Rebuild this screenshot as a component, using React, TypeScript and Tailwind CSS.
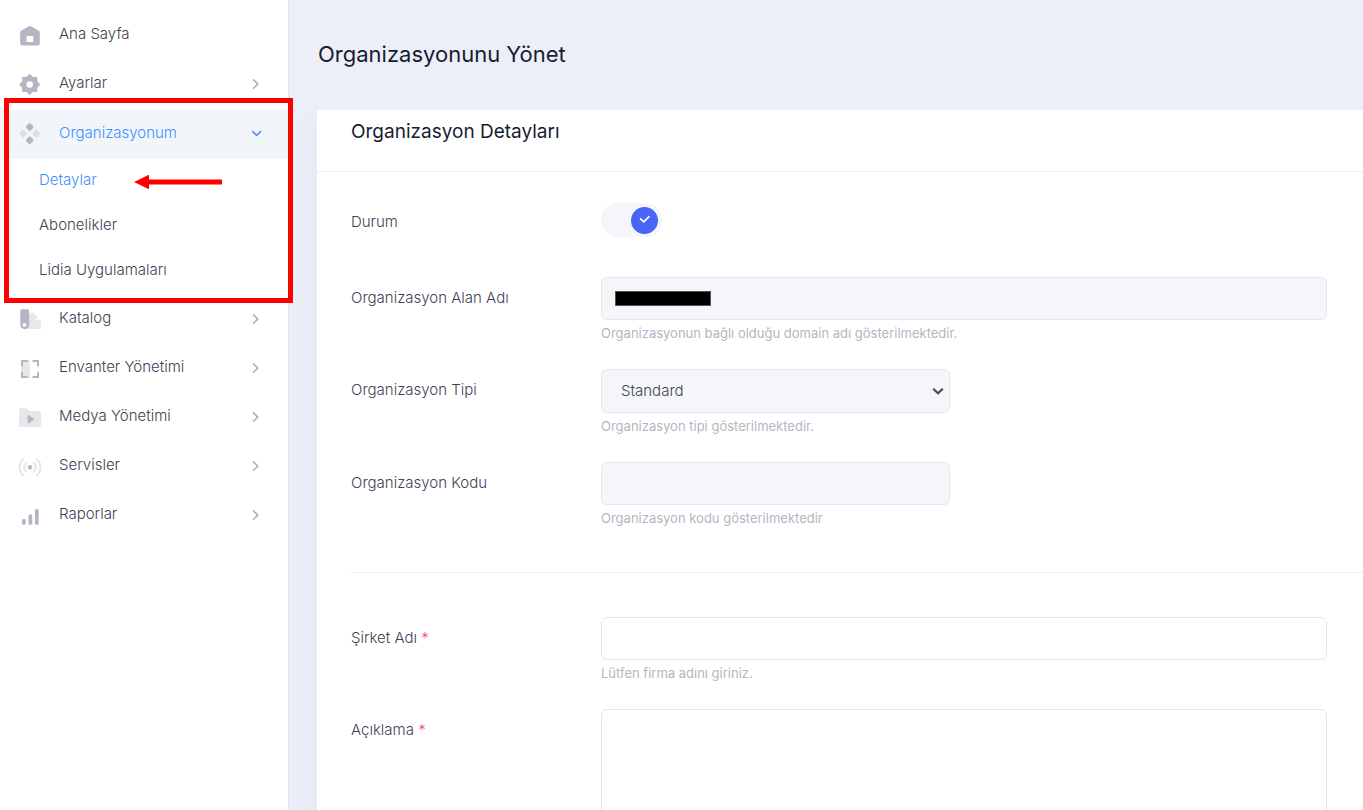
import type { ReactNode } from "react";

const DARK = "#b5b5c3";
const PALE = "#e6e6eb";

function Icon({ children }: { children: ReactNode }) {
  return (
    <svg className="size-6 shrink-0" viewBox="0 0 24 24" fill={DARK} aria-hidden="true">
      {children}
    </svg>
  );
}

const HomeIcon = () => (
  <Icon>
    <path
      fillRule="evenodd"
      d="M2.2 8.6c0-.9.4-1.5 1.200-2L10.800 2.300c.7-.4 1.500-.4 2.200 0l7.600 4.300c.8.500 1.200 1.100 1.200 2v10.800c0 1.200-.9 2.100-2.100 2.100H4.300c-1.200 0-2.100-.9-2.100-2.100zM9.500 12a1 1 0 0 0-1 1v4a1 1 0 0 0 1 1h4.800a1 1 0 0 0 1-1v-4a1 1 0 0 0-1-1z"
    />
  </Icon>
);

const GearIcon = () => (
  <Icon>
    <path
      fillRule="evenodd"
      strokeLinejoin="round"
      d="M11.700.8 14.900 3.900H19.300V8.300L22.400 11.500 19.300 14.700V19.100H14.900L11.700 22.200 8.500 19.100H4.100V14.700L1 11.500 4.100 8.300V3.900H8.500ZM11.700 8.200a3.300 3.300 0 1 0 0 6.600a3.300 3.300 0 0 0 0-6.600z"
    />
  </Icon>
);

const DiamondsIcon = () => (
  <Icon>
    <rect x="8.600" y="1.900" width="6.200" height="6.200" rx="1.700" transform="rotate(45 11.700 5)" />
    <rect x="8.600" y="15.100" width="6.200" height="6.200" rx="1.700" transform="rotate(45 11.700 18.200)" />
    <rect x="2" y="8.500" width="6.200" height="6.200" rx="1.700" transform="rotate(45 5.100 11.600)" fill="#dedfe4" />
    <rect x="15.200" y="8.500" width="6.200" height="6.200" rx="1.700" transform="rotate(45 18.300 11.600)" fill="#dedfe4" />
  </Icon>
);

const CatalogIcon = () => (
  <Icon>
    <path
      fill={PALE}
      d="M11.300 6.800 13.200 4.900c.7-.7 1.600-.7 2.300 0l3 3c.7.700.7 1.600 0 2.300L16.400 12.300H21.300c1 0 1.700.7 1.700 1.700v5.400c0 1-.7 1.700-1.700 1.700H8.500z"
    />
    <path
      fillRule="evenodd"
      d="M4.300 1.300h4.900c1.200 0 2 .8 2 2v13.400a4.450 4.450 0 0 1-8.900 0V3.300c0-1.200.8-2 2-2zM6.500 14.900a1.900 1.900 0 1 0 0 3.800a1.900 1.900 0 0 0 0-3.800z"
    />
  </Icon>
);

const InventoryIcon = () => (
  <Icon>
    <rect x="3" y="3" width="9" height="18" rx="1" fill={PALE} />
    <path
      fill="none"
      stroke={DARK}
      strokeWidth="2"
      strokeLinecap="round"
      d="M9 4H4v4.500M15.200 4H20v4.500M20 15.500V20h-4.800M9 20H4v-4.500"
    />
  </Icon>
);

const MediaIcon = () => (
  <Icon>
    <path
      fill={PALE}
      d="M2.600 2.300h5c.5 0 .9.2 1.200.5L11 5h10.300c1 0 1.700.7 1.700 1.700v12.600c0 1-.7 1.700-1.700 1.700H2.700C1.700 21 1 20.300 1 19.300V4c0-1 .6-1.700 1.600-1.700z"
    />
    <path d="M9.700 9.400v7.800c0 .4.400.6.700.4l5.600-3.900c.3-.2.300-.6 0-.8l-5.600-3.900c-.3-.2-.7 0-.7.400z" />
  </Icon>
);

const ServicesIcon = () => (
  <Icon>
    <g fill="none" stroke={PALE} strokeWidth="2" strokeLinecap="round">
      <path d="M8.400 7.600a5.800 5.800 0 0 0 0 9.200M15.600 7.600a5.800 5.800 0 0 1 0 9.200" />
      <path d="M5.200 4.200a10.500 10.500 0 0 0 0 16M18.800 4.200a10.500 10.500 0 0 1 0 16" />
    </g>
    <circle cx="12" cy="12.200" r="2.200" />
  </Icon>
);

const ReportsIcon = () => (
  <Icon>
    <rect x="4" y="15" width="3.700" height="5.800" rx="1.400" />
    <rect x="10.500" y="10.500" width="3.700" height="10.300" rx="1.400" />
    <rect x="17" y="5" width="3.700" height="15.800" rx="1.400" />
  </Icon>
);

const ChevronRight = () => (
  <svg className="size-3" viewBox="0 0 12 12" fill="none" stroke="#b0b0bf" strokeWidth="1.600" aria-hidden="true">
    <path d="M3.500 .9 7.800 5.100 3.500 9.300" strokeLinecap="round" strokeLinejoin="round" />
  </svg>
);

const ChevronDown = () => (
  <svg className="size-3" viewBox="0 0 12 12" fill="none" stroke="#3f8fff" strokeWidth="1.600" aria-hidden="true">
    <path d="M2.600 3.500 6.600 7.500 10.600 3.500" strokeLinecap="round" strokeLinejoin="round" />
  </svg>
);

type NavItem = { label: string; icon: ReactNode; leaf?: boolean };

const before: NavItem[] = [
  { label: "Ana Sayfa", icon: <HomeIcon />, leaf: true },
  { label: "Ayarlar", icon: <GearIcon /> },
];

const after: NavItem[] = [
  { label: "Katalog", icon: <CatalogIcon /> },
  { label: "Envanter Yönetimi", icon: <InventoryIcon /> },
  { label: "Medya Yönetimi", icon: <MediaIcon /> },
  { label: "Servisler", icon: <ServicesIcon /> },
  { label: "Raporlar", icon: <ReportsIcon /> },
];

function NavRow({ label, icon, leaf }: NavItem) {
  return (
    <li>
      <a href="#" className="flex h-[49px] items-center pr-[26px] pl-[18px]">
        {icon}
        <span className="flex-1 pb-[3px] pl-[17px]">{label}</span>
        {!leaf && <ChevronRight />}
      </a>
    </li>
  );
}

function Sidebar() {
  return (
    <nav className="relative w-[289px] shrink-0 border-r border-[#e4e6ef] bg-white pt-[11px] text-[15px] leading-5 font-light text-[#3f4254]">
      <ul>
        {before.map((item) => (
          <NavRow key={item.label} {...item} />
        ))}
        <li>
          <button
            type="button"
            aria-expanded="true"
            className="flex h-[50px] w-full items-center bg-[#f2f5f9] pr-[26px] pl-[18px] text-left text-[#3f8fff]"
          >
            <DiamondsIcon />
            <span className="flex-1 pb-[3px] pl-[17px]">Organizasyonum</span>
            <ChevronDown />
          </button>
          <ul className="pb-px">
            <li>
              <a href="#" className="flex h-[45px] items-center pb-[3px] pl-[39px] text-[#3f8fff]">
                Detaylar
              </a>
            </li>
            <li>
              <a href="#" className="flex h-[45px] items-center pb-[3px] pl-[39px]">
                Abonelikler
              </a>
            </li>
            <li>
              <a href="#" className="flex h-[45px] items-center pb-[3px] pl-[39px]">
                Lidia Uygulamaları
              </a>
            </li>
          </ul>
        </li>
        {after.map((item) => (
          <NavRow key={item.label} {...item} />
        ))}
      </ul>
      <div className="pointer-events-none absolute top-[98px] left-1 z-10 h-[205px] w-[289px] border-5 border-[#ff0000]" />
      <svg
        className="pointer-events-none absolute top-[174px] left-[134px] h-4 w-[88px]"
        viewBox="0 0 88 16"
        fill="#ff0000"
        aria-hidden="true"
      >
        <path d="M0 8 15 .7V5.500H88v5H15v4.800z" />
      </svg>
    </nav>
  );
}

const fieldClass = "block w-full rounded-md border border-[#e4e6ef] px-[19px] text-[15px] font-light text-[#3f4254]";

function Field({
  id,
  label,
  required,
  help,
  half,
  children,
}: {
  id: string;
  label: string;
  required?: boolean;
  help?: string;
  half?: boolean;
  children: ReactNode;
}) {
  return (
    <div className="flex pr-9">
      <label htmlFor={id} className="w-[250px] shrink-0 pt-[11px] text-[15px] leading-5 font-light">
        {label} {required && <span className="text-[#f64e60]">*</span>}
      </label>
      <div className="min-w-0 flex-1">
        <div className={half ? "w-1/2 pr-[14px]" : "w-full"}>{children}</div>
        {help && <p className="pt-[3px] text-[13px] leading-5 text-[#b5b5c3]">{help}</p>}
      </div>
    </div>
  );
}

export default function App() {
  return (
    <div className="flex h-screen overflow-hidden bg-[#eceff7] font-[Inter,sans-serif] text-[#3f4254]">
      <Sidebar />
      <main className="flex min-w-0 flex-1 flex-col">
        <h1 className="px-[29px] pt-10 pb-[42px] text-[22px] leading-7 text-[#181c32]">Organizasyonunu Yönet</h1>
        <div className="flex-1 overflow-hidden pl-7">
          <section className="bg-white pb-8 shadow-[0_0_30px_0_rgba(82,63,205,0.05)]">
            <h2 className="border-b border-[#ebedf3] px-[34px] pt-[9px] pb-[27px] text-[19px] leading-[25px] text-[#181c32]">
              Organizasyon Detayları
            </h2>
            <form className="pt-[31px] pl-[34px]">
              <div className="flex pb-10">
                <label htmlFor="status" className="w-[250px] pt-[9px] text-[15px] leading-5 font-light">
                  Durum
                </label>
                <label className="flex h-[34px] w-[61px] items-center justify-end rounded-full bg-[#f4f6fa] pr-1">
                  <input id="status" type="checkbox" defaultChecked className="peer sr-only" />
                  <span className="flex size-[27px] items-center justify-center rounded-full bg-[#4766f6]">
                    <svg className="size-3" viewBox="0 0 12 12" fill="none" stroke="#fff" strokeWidth="1.800" aria-hidden="true">
                      <path d="M1 4.300 4.800 7.800 10.300 2.300" />
                    </svg>
                  </span>
                </label>
              </div>

              <div className="flex flex-col gap-[26px]">
                <Field id="domain" label="Organizasyon Alan Adı" help="Organizasyonun bağlı olduğu domain adı gösterilmektedir.">
                  <div className="relative">
                    <input id="domain" type="text" disabled className={`${fieldClass} h-[43px] bg-[#f4f6fa]`} />
                    <span className="absolute top-[14px] left-[14px] h-[15px] w-24 border border-[#555] bg-black" />
                  </div>
                </Field>
                <Field id="type" label="Organizasyon Tipi" half help="Organizasyon tipi gösterilmektedir.">
                  <div className="relative">
                    <select id="type" disabled defaultValue="standard" className={`${fieldClass} h-[44px] appearance-none bg-[#f4f6fa] opacity-100`}>
                      <option value="standard">Standard</option>
                    </select>
                    <svg
                      className="pointer-events-none absolute top-4 right-[6px] size-3"
                      viewBox="0 0 12 12"
                      fill="none"
                      stroke="#3f4254"
                      strokeWidth="2"
                      aria-hidden="true"
                    >
                      <path d="M1.200 3.800 6 8.300 10.800 3.800" />
                    </svg>
                  </div>
                </Field>
                <Field id="code" label="Organizasyon Kodu" half help="Organizasyon kodu gösterilmektedir">
                  <input id="code" type="text" disabled className={`${fieldClass} h-[43px] bg-[#f4f6fa]`} />
                </Field>
              </div>

              <hr className="my-11 border-[#ebedf3]" />

              <div className="flex flex-col gap-[26px]">
                <Field id="company" label="Şirket Adı" required help="Lütfen firma adını giriniz.">
                  <input id="company" type="text" className={`${fieldClass} h-[43px] bg-white`} />
                </Field>
                <Field id="description" label="Açıklama" required>
                  <textarea id="description" rows={6} className={`${fieldClass} resize-none bg-white py-3`} />
                </Field>
              </div>
            </form>
          </section>
        </div>
      </main>
    </div>
  );
}
